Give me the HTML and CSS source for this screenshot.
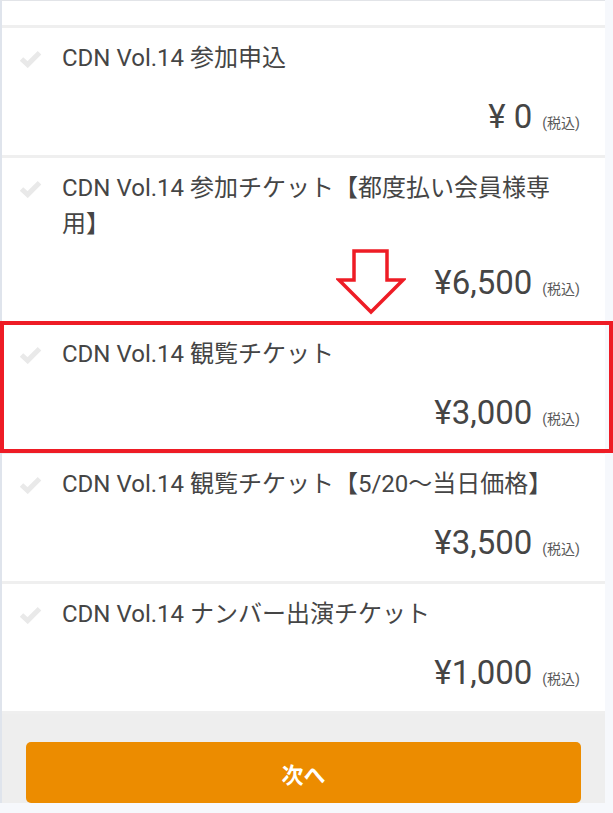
FILE: index.html
```html
<!DOCTYPE html>
<html lang="ja">
<head>
  <meta charset="UTF-8" />
  <meta name="viewport" content="width=device-width, initial-scale=1.0"/>
  <title>チケット選択</title>
  <link rel="stylesheet" href="styles.css">
</head>
<body>
  <div class="panel">
    <div class="top-rest"></div>

    <div class="ticket">
      <div class="ticket-name">
        <svg class="check" viewBox="0 0 20 16"><polyline points="2,8 7.5,13 18,2.5" /></svg>
        CDN Vol.14 参加申込
      </div>
      <div class="price">¥ 0<span class="tax">(税込)</span></div>
    </div>

    <div class="ticket">
      <div class="ticket-name">
        <svg class="check" viewBox="0 0 20 16"><polyline points="2,8 7.5,13 18,2.5" /></svg>
        CDN Vol.14 参加チケット【都度払い会員様専用】
      </div>
      <div class="price">¥6,500<span class="tax">(税込)</span></div>
      <svg class="arrow" viewBox="0 0 70 66">
        <polygon points="18,2 51,2 51,31 67,31 35,63 3,31 18,31" />
      </svg>
    </div>

    <div class="ticket marked">
      <div class="ticket-name">
        <svg class="check" viewBox="0 0 20 16"><polyline points="2,8 7.5,13 18,2.5" /></svg>
        CDN Vol.14 観覧チケット
      </div>
      <div class="price">¥3,000<span class="tax">(税込)</span></div>
    </div>

    <div class="ticket">
      <div class="ticket-name">
        <svg class="check" viewBox="0 0 20 16"><polyline points="2,8 7.5,13 18,2.5" /></svg>
        CDN Vol.14 観覧チケット【5/20～当日価格】
      </div>
      <div class="price">¥3,500<span class="tax">(税込)</span></div>
    </div>

    <div class="ticket">
      <div class="ticket-name">
        <svg class="check" viewBox="0 0 20 16"><polyline points="2,8 7.5,13 18,2.5" /></svg>
        CDN Vol.14 ナンバー出演チケット
      </div>
      <div class="price">¥1,000<span class="tax">(税込)</span></div>
    </div>

    <div class="footer">
      <button class="next">次へ</button>
    </div>
  </div>
</body>
</html>
```

FILE: styles.css
```css
body {
  margin: 0;
  background: #f6f8fc;
  font-family: "Roboto", "Noto Sans CJK JP", sans-serif;
  color: #333;
}
.panel {
  width: 603px;
  border-left: 2px solid #dfe4ec;
  border-top: 1px solid #e2e4e8;
  background: #fff;
}
.top-rest {
  height: 24px;
  border-bottom: 3px solid #efefef;
}
.ticket {
  position: relative;
  padding: 12px 25px 18px 60px;
  border-bottom: 3px solid #efefef;
}
.ticket-name {
  position: relative;
  font-size: 24px;
  line-height: 36px;
  color: #454545;
}
.check {
  position: absolute;
  left: -43px;
  top: 10px;
  width: 23px;
  height: 18px;
}
.check polyline {
  fill: none;
  stroke: #e9e9e9;
  stroke-width: 4.5;
}
.price {
  margin-top: 21px;
  text-align: right;
  font-size: 33px;
  line-height: 40px;
  color: #454545;
}
.tax {
  margin-left: 10px;
  font-size: 14px;
  line-height: 1;
  color: #5a5a5a;
}
.arrow {
  position: absolute;
  left: 334px;
  top: 91px;
  width: 70px;
  height: 66px;
}
.arrow polygon {
  fill: #fff;
  stroke: #ee1c25;
  stroke-width: 3.5;
}
.marked::after {
  content: "";
  position: absolute;
  left: -2px;
  right: -8px;
  top: -3px;
  bottom: -2px;
  border: 4px solid #ee1c25;
  pointer-events: none;
}
.footer {
  background: #eeeeee;
  padding: 28px 24px 0;
  height: 89px;
  box-sizing: border-box;
}
.next {
  display: block;
  width: 100%;
  height: 61px;
  border: none;
  border-radius: 5px;
  background: #ec8c00;
  color: #fff;
  font-family: "Noto Sans CJK JP", sans-serif;
  font-size: 22px;
  font-weight: bold;
}
```
